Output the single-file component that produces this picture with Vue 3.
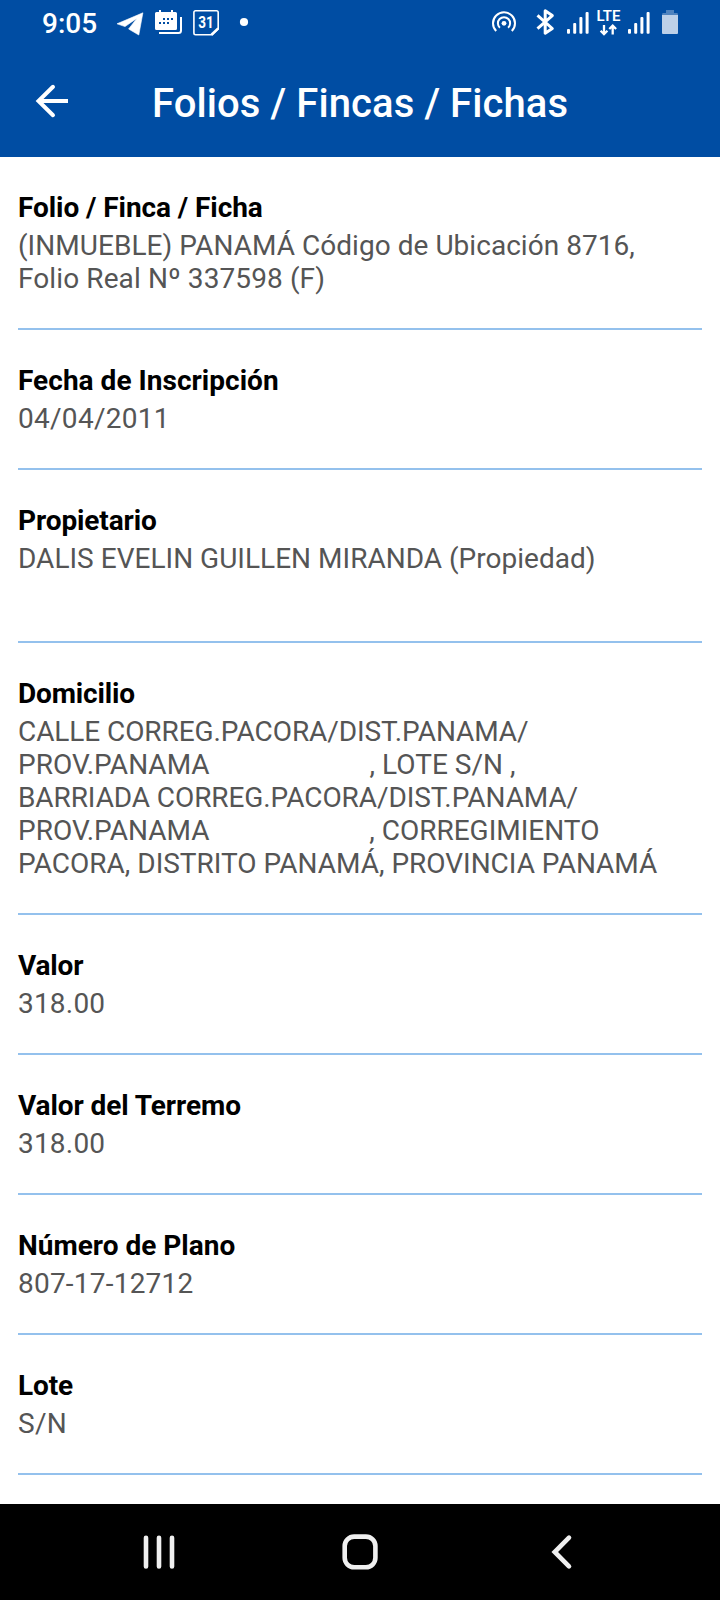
<script setup>
const gap = '\u00a0'.repeat(23)
// Each line is [text, letter spacing in px].
const fields = [
  { label: ['Folio / Finca / Ficha', -0.07], lines: [['(INMUEBLE) PANAMÁ Código de Ubicación 8716,', 0.04], ['Folio Real Nº 337598 (F)', 0.1]] },
  { label: ['Fecha de Inscripción', 0.03], lines: [['04/04/2011', 0.28]] },
  { label: ['Propietario', -0.1], lines: [['DALIS EVELIN GUILLEN MIRANDA (Propiedad)', 0.015], ['\u00a0', 0]] },
  {
    label: ['Domicilio', -0.14],
    lines: [
      ['CALLE CORREG.PACORA/DIST.PANAMA/', -0.08],
      [`PROV.PANAMA${gap}, LOTE S/N ,`, 0.01],
      ['BARRIADA CORREG.PACORA/DIST.PANAMA/', -0.09],
      [`PROV.PANAMA${gap}, CORREGIMIENTO`, 0],
      ['PACORA, DISTRITO PANAMÁ, PROVINCIA PANAMÁ', -0.01],
    ],
  },
  { label: ['Valor', -0.15], lines: [['318.00', 0.2]] },
  { label: ['Valor del Terremo', -0.08], lines: [['318.00', 0.2]] },
  { label: ['Número de Plano', 0], lines: [['807-17-12712', 0.22]] },
  { label: ['Lote', -0.15], lines: [['S/N', 0.3]] },
]
</script>

<template>
  <div class="screen">
    <div class="status">
      <span class="time">9:05</span>
      <svg class="left-icons" width="140" height="48" viewBox="112 0 140 48" fill="#fff">
        <path d="M117 23.8 142.9 12.8 138.8 35 128.6 29 136.8 18.4 125 26.6Z" stroke="#fff" stroke-width=".6" stroke-linejoin="round" />
        <path d="M156.500 12H159V10h2v2h10v-2h2v2h2.500q1.500 0 1.500 1.500V28.500q0 1.500-1.500 1.500H156.500q-1.500 0-1.500-1.500V13.500q0-1.500 1.500-1.500Z" />
        <path d="M159 33.100H178.500q2.500 0 2.500-2.500V17" fill="none" stroke="#fff" stroke-width="2" />
        <path d="M163 18h2v2h-2zM167 18h2v2h-2zM171 18h2v2h-2zM159 22h2v2h-2zM163 22h2v2h-2zM167 22h2v2h-2z" fill="#004da3" />
        <path d="M195.600 10.800H216.500q1.700 0 1.700 1.700V28.800L212 34.800H195.600q-1.700 0-1.700-1.700V12.500q0-1.700 1.700-1.700Z" fill="none" stroke="#fff" stroke-width="1.600" />
        <path d="M211.500 34.800 218.200 28.400" fill="none" stroke="#fff" stroke-width="2.600" />
        <text x="198.300" y="28" font-size="16" font-weight="700" textLength="15.500" lengthAdjust="spacingAndGlyphs">31</text>
        <circle cx="244" cy="22" r="4.100" />
      </svg>
      <svg class="right-icons" width="190" height="48" viewBox="490 0 190 48" fill="#fff">
        <circle cx="504" cy="23.300" r="2.400" />
        <g fill="none" stroke="#fff" stroke-width="2">
          <path d="M499.900 27.800A6.100 6.100 0 1 1 508.100 27.800" />
          <path d="M496.200 31A11 11 0 1 1 511.800 31" />
        </g>
        <path d="M537.500 15.400 552.300 28.500 545.200 33.200V10.800L552.300 15.600 537.500 28.700" fill="none" stroke="#fff" stroke-width="3" stroke-linejoin="round" />
        <g v-for="x in [567, 628]" :key="x">
          <rect :x="x" y="29" width="3" height="4.800" rx="1" />
          <rect :x="x + 6.200" y="23" width="3" height="10.800" rx="1" />
          <rect :x="x + 12.400" y="17" width="3" height="16.800" rx="1" />
          <rect :x="x + 18.600" y="12" width="3" height="21.800" rx="1" />
        </g>
        <text x="596.500" y="21.300" font-size="14.800" font-weight="600" textLength="24" lengthAdjust="spacingAndGlyphs">LTE</text>
        <path d="M604 25V34M600.600 30.800 604 34.200 607.400 30.800M612.700 34.500V26M609.300 29 612.700 25.600 616.100 29" fill="none" stroke="#fff" stroke-width="2.300" />
        <path d="M666 10h8v3h3q1 0 1 2h-16q0-2 1-2h3Z" fill="#4d82be" />
        <path d="M662 15h16v18q0 1-1 1h-14q-1 0-1-1Z" fill="#bcd0e8" />
      </svg>
    </div>

    <header class="bar">
      <svg width="36" height="36" viewBox="34 83 36 36" fill="none" stroke="#fff" stroke-width="4">
        <path d="M68 101H39" />
        <path d="M53 86.800 38.500 101 53 115.200" stroke-linecap="round" />
      </svg>
      <h1>Folios / Fincas / Fichas</h1>
    </header>

    <main>
      <section v-for="f in fields" :key="f.label[0]" class="field">
        <h2 :style="{ letterSpacing: f.label[1] + 'px' }">{{ f.label[0] }}</h2>
        <p v-for="(l, i) in f.lines" :key="i" :style="{ letterSpacing: l[1] + 'px' }">{{ l[0] }}</p>
      </section>
    </main>

    <nav>
      <svg width="720" height="96" viewBox="0 1504 720 96" fill="none" stroke="#f0f0f0" stroke-width="4.600" stroke-linecap="round">
        <path d="M146 1537.800V1566.500M159 1537.800V1566.500M172 1537.800V1566.500" />
        <rect x="344.700" y="1536.600" width="30.700" height="30.700" rx="9.500" />
        <path d="M569 1537.700 554.700 1552 569 1566.300" />
      </svg>
    </nav>
  </div>
</template>

<style>
body {
  margin: 0;
  background: #fff;
}
</style>

<style scoped>
.screen {
  width: 720px;
  height: 1600px;
  display: flex;
  flex-direction: column;
  overflow: hidden;
  background: #fff;
  font-family: Roboto, "Liberation Sans", sans-serif;
}
.status {
  height: 48px;
  display: flex;
  background: #004da3;
  color: #fff;
}
.time {
  width: 70px;
  padding-left: 42px;
  font-size: 28px;
  font-weight: 500;
  line-height: 48px;
}
.right-icons {
  margin-left: auto;
  margin-right: 40px;
}
.bar {
  height: 109px;
  display: flex;
  background: #004da3;
  color: #fff;
}
.bar svg {
  margin: 35px 0 0 34px;
}
h1 {
  margin: 32px 0 0 82px;
  font-size: 40px;
  font-weight: 500;
  line-height: 48px;
  letter-spacing: 0.09px;
  white-space: nowrap;
}
main {
  flex: 1;
  padding: 0 18px;
}
.field {
  padding: 34px 0 33px;
  border-bottom: 2px solid #94c1ed;
}
h2 {
  margin: 0 0 5px;
  font-size: 28px;
  font-weight: 700;
  line-height: 33px;
  color: #000;
}
p {
  margin: 0;
  font-size: 28px;
  line-height: 33px;
  color: #555;
  white-space: nowrap;
}
nav {
  height: 96px;
  background: #000;
}
nav svg {
  display: block;
}
</style>
